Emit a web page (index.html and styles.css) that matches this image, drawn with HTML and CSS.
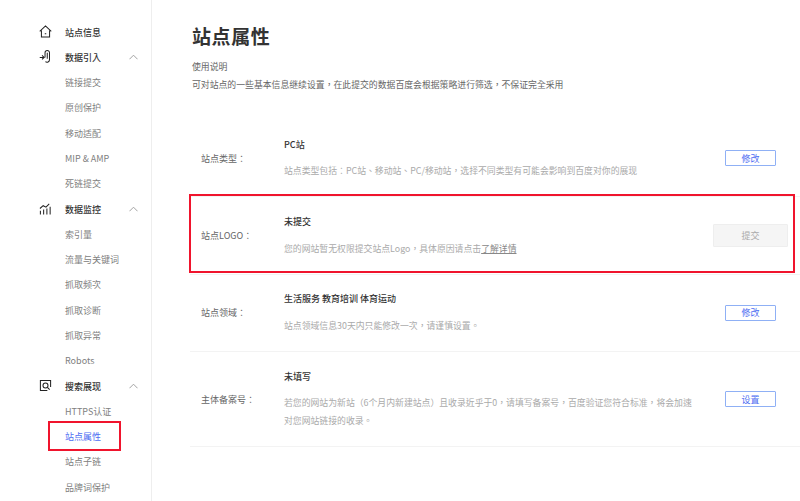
FILE: index.html
```html
<!DOCTYPE html>
<html lang="zh-Hant">
<head>
<meta charset="utf-8">
<title>站点属性</title>
<link rel="stylesheet" href="styles.css">
</head>
<body>
<div class="page">
  <nav class="side">
    <a class="nav head"><svg class="ico" viewBox="0 0 14 14"><path d="M.8 6.800 7 1l6.200 5.800M2.600 6v6.800h8.800V6M6.200 9.500h1.600"/></svg><span class="lbl">站点信息</span></a>
    <a class="nav head"><svg class="ico" viewBox="0 0 14 14"><path d="M6.500 8V3a2.400 2.400 0 0 1 4.800 0v7.500a2.700 2.700 0 0 1-4.400 2.100M8.900 3v6.500M.8 8h4.700M3.300 5.800 5.500 8l-2.200 2.200"/></svg><span class="lbl">数据引入</span><svg class="chev" viewBox="0 0 10 6"><path d="M.5 5.500 5 1l4.500 4.500"/></svg></a>
    <a class="nav">链接提交</a>
    <a class="nav">原创保护</a>
    <a class="nav">移动适配</a>
    <a class="nav">MIP &amp; AMP</a>
    <a class="nav">死链提交</a>
    <a class="nav head"><svg class="ico" viewBox="0 0 14 14"><path d="M1.500 13.500V9.500M5 13.500V8M8.500 13.500V7M12 13.500V5M1 7l3.500-3 3 1.500L11 2"/></svg><span class="lbl">数据监控</span><svg class="chev" viewBox="0 0 10 6"><path d="M.5 5.500 5 1l4.500 4.500"/></svg></a>
    <a class="nav">索引量</a>
    <a class="nav">流量与关键词</a>
    <a class="nav">抓取频次</a>
    <a class="nav">抓取诊断</a>
    <a class="nav">抓取异常</a>
    <a class="nav">Robots</a>
    <a class="nav head"><svg class="ico" viewBox="0 0 14 14"><path d="M12.500 8.500V1.500H1.500v11H9"/><circle cx="7" cy="7" r="2.700"/><path d="m9 9 2.500 2.500"/></svg><span class="lbl">搜索展现</span><svg class="chev" viewBox="0 0 10 6"><path d="M.5 5.500 5 1l4.500 4.500"/></svg></a>
    <a class="nav">HTTPS认证</a>
    <a class="nav current">站点属性</a>
    <a class="nav">站点子链</a>
    <a class="nav">品牌词保护</a>
  </nav>
  <main class="main">
    <h1 class="title">站点属性</h1>
    <p class="intro">使用说明</p>
    <p class="intro">可对站点的一些基本信息继续设置，在此提交的数据百度会根据策略进行筛选，不保证完全采用</p>
    <section class="rows">
      <div class="row">
        <div class="key">站点类型：</div>
        <div class="body">
          <div class="val">PC站</div>
          <div class="desc">站点类型包括：PC站、移动站、PC/移动站，选择不同类型有可能会影响到百度对你的展现</div>
        </div>
        <div class="act"><button class="btn">修改</button></div>
      </div>
      <div class="row">
        <div class="key">站点LOGO：</div>
        <div class="body">
          <div class="val">未提交</div>
          <div class="desc">您的网站暂无权限提交站点Logo，具体原因请点击<u>了解详情</u></div>
        </div>
        <div class="act"><button class="btn off">提交</button></div>
      </div>
      <div class="row">
        <div class="key">站点领域：</div>
        <div class="body">
          <div class="val">生活服务 教育培训 体育运动</div>
          <div class="desc">站点领域信息30天内只能修改一次，请谨慎设置。</div>
        </div>
        <div class="act"><button class="btn">修改</button></div>
      </div>
      <div class="row tall">
        <div class="key">主体备案号：</div>
        <div class="body">
          <div class="val">未填写</div>
          <div class="desc">若您的网站为新站（6个月内新建站点）且收录近乎于0，请填写备案号，百度验证您符合标准，将会加速对您网站链接的收录。</div>
        </div>
        <div class="act"><button class="btn">设置</button></div>
      </div>
    </section>
  </main>
  <div class="mark mark-logo"></div>
  <div class="mark mark-nav"></div>
</div>
</body>
</html>
```
FILE: styles.css
```css
* { box-sizing: border-box; }
html, body { margin: 0; height: 100%; overflow: hidden; background: #fff; }
body { font-family: "Noto Sans CJK TC", "Liberation Sans", sans-serif; font-size: 9px; color: #666; }
.page { position: relative; display: flex; width: 800px; height: 501px; overflow: hidden; }
.side { flex: none; width: 152px; height: 501px; padding: 19.200px 0 0 65px; border-right: 1px solid #eee; }
.nav { position: relative; display: flex; align-items: center; height: 25.300px; color: #808080; white-space: nowrap; }
.head { padding-top: 1.500px; color: #333; font-weight: 500; }
.current { color: #4e6ef2; }
.ico { position: absolute; left: -26px; top: 6px; width: 13px; height: 13px; fill: none; stroke: #222; stroke-width: 1.100; }
.chev { position: absolute; left: 64px; top: 10px; width: 9px; height: 6px; fill: none; stroke: #999; stroke-width: 1; }
.main { flex: 1; padding: 23px 0 0 40px; min-width: 0; }
.title { margin: 0 0 9px; font-size: 19px; line-height: 26px; font-weight: 700; letter-spacing: .6px; color: #333; }
.intro { margin: 0; font-size: 8.860px; line-height: 18px; color: #666; }
.rows { margin: 26px 0 0 -2px; }
.row { display: flex; align-items: center; height: 77.300px; border-bottom: 1px solid #f3f3f3; }
.tall { height: 95.500px; }
.key { flex: none; width: 94px; padding-left: 11px; color: #666; }
.body { flex: none; width: 415px; padding-top: 2px; }
.val { color: #333; font-weight: 500; line-height: 14px; margin-bottom: 10.500px; }
.desc { font-size: 8.860px; line-height: 18px; color: #aaa; }
.desc u { color: #888; }
.act { flex: 1; display: flex; justify-content: center; padding-left: 2px; }
.btn { width: 51px; height: 16px; padding: 0; border: 1px solid #8fb0f5; border-radius: 1px; background: #fff; color: #4e6ef2; font: inherit; }
.off { width: 75px; height: 23px; border-color: #eee; background: #f5f5f5; color: #aaa; }
.mark { position: absolute; border: 2px solid #f0142d; pointer-events: none; }
.mark-logo { left: 189px; top: 194px; width: 605.500px; height: 79px; }
.mark-nav { left: 48px; top: 421px; width: 73px; height: 30px; }
```
